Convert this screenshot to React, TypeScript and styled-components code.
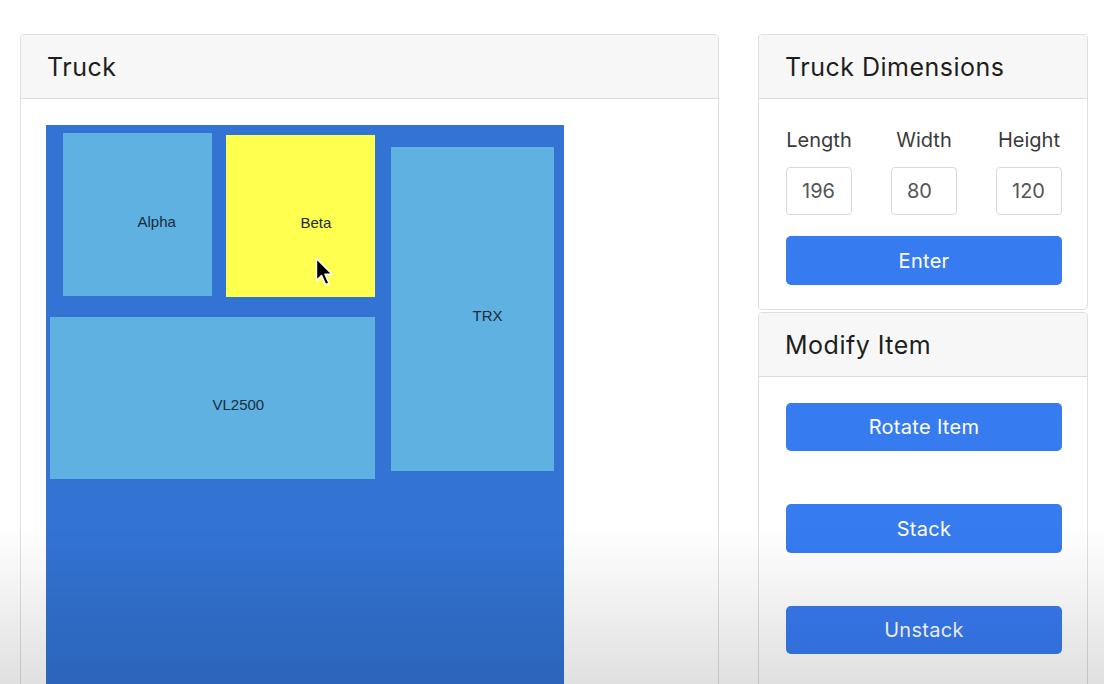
import React from "react";
import styled, { createGlobalStyle } from "styled-components";

const GlobalStyle = createGlobalStyle`
  html, body {
    margin: 0;
    padding: 0;
    background: #ffffff;
    height: 684px;
    overflow: hidden;
  }
  body {
    font-family: Inter, "Open Sans", "Liberation Sans", sans-serif;
    color: #212529;
  }
  * { box-sizing: border-box; }
`;

const Page = styled.div`
  display: flex;
  align-items: flex-start;
  gap: 39px;
  padding: 34px 17px 0 20px;
  height: 684px;
`;

const Card = styled.section<{ $width: number; $height?: number }>`
  width: ${(p) => p.$width}px;
  ${(p) => (p.$height ? `height: ${p.$height}px;` : "")}
  flex-shrink: 0;
  border: 1px solid #dfdfdf;
  border-radius: 4px;
  background: #ffffff;
  overflow: hidden;
`;

const CardHeader = styled.header`
  height: 64px;
  display: flex;
  align-items: center;
  padding: 1px 26px 0;
  background: #f7f7f7;
  border-bottom: 1px solid #dcdcdc;
  font-size: 25px;
  color: #1e1e1e;
  letter-spacing: 0.5px;
`;

const TruckBody = styled.div`
  padding: 26px 25px;
`;

const TruckCanvas = styled.div`
  position: relative;
  width: 518px;
  height: 620px;
  background: #3273d3;
`;

const Item = styled.div<{ $yellow?: boolean }>`
  position: absolute;
  background: ${(p) => (p.$yellow ? "#ffff4f" : "#5eb1e1")};
`;

const ItemLabel = styled.span`
  position: absolute;
  left: 50%;
  top: 50%;
  margin-top: -2px;
  font-family: "Liberation Sans", Arial, sans-serif;
  font-size: 15px;
  color: #1c2b3a;
  white-space: nowrap;
`;

const Cursor = styled.svg`
  position: absolute;
  pointer-events: none;
`;

const Side = styled.div`
  display: flex;
  flex-direction: column;
  gap: 2px;
  width: 330px;
`;

const DimsBody = styled.div`
  padding: 27px 25px 24px 27px;
  display: flex;
  flex-direction: column;
  gap: 21px;
`;

const DimsRow = styled.div`
  display: flex;
  justify-content: space-between;
`;

const Field = styled.label`
  display: flex;
  flex-direction: column;
  align-items: center;
  gap: 13px;
  width: 66px;
`;

const FieldLabel = styled.span`
  font-size: 20px;
  line-height: 28px;
  color: #3a3a3a;
  white-space: nowrap;
`;

const NumInput = styled.input`
  width: 66px;
  height: 48px;
  border: 1px solid #d9d9d9;
  border-radius: 4px;
  padding: 0 12px 0 15px;
  font-family: Inter, "Open Sans", sans-serif;
  font-size: 20px;
  color: #555;
  background: #fff;
  outline: none;
`;

const PrimaryButton = styled.button<{ $height?: number }>`
  width: 276px;
  height: ${(p) => p.$height ?? 48}px;
  border: none;
  border-radius: 5px;
  background: #377bf1;
  color: #ffffff;
  font-family: Inter, "Open Sans", sans-serif;
  font-size: 20px;
  letter-spacing: 0.3px;
  cursor: pointer;
`;

const ModifyBody = styled.div`
  padding: 26px 25px 30px 27px;
  display: flex;
  flex-direction: column;
  gap: 53px;
`;

const Shade = styled.div`
  position: fixed;
  left: 0;
  right: 0;
  bottom: 0;
  height: 160px;
  pointer-events: none;
  background: linear-gradient(
    to bottom,
    rgba(0, 0, 0, 0) 0%,
    rgba(0, 0, 0, 0.04) 35%,
    rgba(0, 0, 0, 0.12) 100%
  );
`;

type Box = { name: string; x: number; y: number; w: number; h: number; yellow?: boolean };

const items: Box[] = [
  { name: "Alpha", x: 17, y: 8, w: 149, h: 163 },
  { name: "Beta", x: 180, y: 10, w: 149, h: 162, yellow: true },
  { name: "TRX", x: 345, y: 22, w: 163, h: 324 },
  { name: "VL2500", x: 4, y: 192, w: 325, h: 162 },
];

export default function App() {
  return (
    <>
      <GlobalStyle />
      <Page>
        <Card $width={699} $height={700}>
          <CardHeader>Truck</CardHeader>
          <TruckBody>
            <TruckCanvas>
              {items.map((it) => (
                <Item
                  key={it.name}
                  $yellow={it.yellow}
                  style={{ left: it.x, top: it.y, width: it.w, height: it.h }}
                >
                  <ItemLabel>{it.name}</ItemLabel>
                </Item>
              ))}
              <Cursor
                width="20"
                height="30"
                viewBox="0 0 14 21"
                style={{ left: 269, top: 132 }}
              >
                <path
                  d="M1 1 L1 16.5 L4.6 13 L7.4 19.4 L9.8 18.4 L7 12.1 L12 12.1 Z"
                  fill="#000"
                  stroke="#fff"
                  strokeWidth="1.1"
                  strokeLinejoin="round"
                />
              </Cursor>
            </TruckCanvas>
          </TruckBody>
        </Card>
        <Side>
          <Card $width={330}>
            <CardHeader>Truck Dimensions</CardHeader>
            <DimsBody>
              <DimsRow>
                <Field>
                  <FieldLabel>Length</FieldLabel>
                  <NumInput defaultValue="196" />
                </Field>
                <Field>
                  <FieldLabel>Width</FieldLabel>
                  <NumInput defaultValue="80" />
                </Field>
                <Field>
                  <FieldLabel>Height</FieldLabel>
                  <NumInput defaultValue="120" />
                </Field>
              </DimsRow>
              <PrimaryButton $height={49}>Enter</PrimaryButton>
            </DimsBody>
          </Card>
          <Card $width={330} $height={420}>
            <CardHeader>Modify Item</CardHeader>
            <ModifyBody>
              <PrimaryButton>Rotate Item</PrimaryButton>
              <PrimaryButton $height={49}>Stack</PrimaryButton>
              <PrimaryButton>Unstack</PrimaryButton>
            </ModifyBody>
          </Card>
        </Side>
      </Page>
      <Shade />
    </>
  );
}
